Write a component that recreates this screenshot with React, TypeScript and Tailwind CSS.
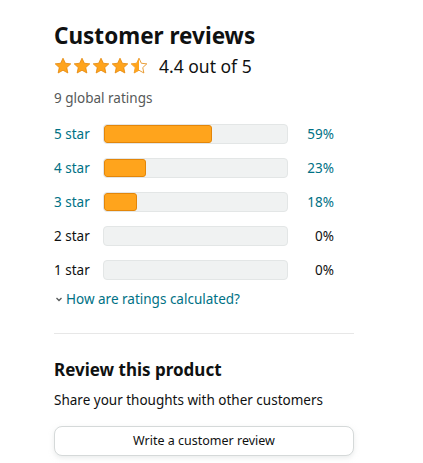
const rows = [
  { label: '5 star', pct: 59 },
  { label: '4 star', pct: 23 },
  { label: '3 star', pct: 18 },
  { label: '2 star', pct: 0 },
  { label: '1 star', pct: 0 },
];

function Star({ fill }: { fill: 'full' | 'half' }) {
  const d =
    'M9 1.2l2.35 5.05 5.45.62-4.05 3.72 1.1 5.38L9 13.25 4.15 15.97l1.1-5.38L1.2 6.87l5.45-.62z';
  return (
    <svg width="18" height="18" viewBox="0 0 18 18">
      <defs>
        <clipPath id="halfclip">
          <rect x="0" y="0" width="9" height="18" />
        </clipPath>
      </defs>
      {fill === 'full' ? (
        <path d={d} fill="#FFA41C" stroke="#E3860A" strokeWidth="0.8" strokeLinejoin="round" />
      ) : (
        <>
          <path d={d} fill="#fff" stroke="#E3860A" strokeWidth="0.8" strokeLinejoin="round" />
          <path d={d} fill="#FFA41C" clipPath="url(#halfclip)" />
        </>
      )}
    </svg>
  );
}

export default function App() {
  return (
    <div className="min-h-screen bg-white pl-[54px] pt-[20px] text-[#0F1111]" style={{ fontFamily: '"Noto Sans", Arial, sans-serif' }}>
      <div className="w-[300px]">
        <h2 className="text-[22.5px] font-bold leading-[32px]">Customer reviews</h2>
        <div className="mt-[2px] flex items-center">
          <div className="flex gap-[1px]">
            <Star fill="full" />
            <Star fill="full" />
            <Star fill="full" />
            <Star fill="full" />
            <Star fill="half" />
          </div>
          <span className="ml-[11px] text-[17.5px] leading-[24px]">4.4 out of 5</span>
        </div>
        <p className="mt-[10px] text-[13.5px] leading-[20px] text-[#565959]">9 global ratings</p>

        <div className="mt-[16px] flex w-[280px] flex-col gap-[14px]">
          {rows.map((r) => {
            const link = r.pct > 0;
            return (
              <div key={r.label} className="flex h-[20px] items-center text-[13.5px]">
                <span className={`w-[49px] ${link ? 'text-[#007185]' : 'text-[#0F1111]'}`}>{r.label}</span>
                <div className="h-[20px] w-[185px] overflow-hidden rounded-[4px] border border-[#E3E6E6] bg-[#F0F2F2]">
                  {r.pct > 0 && (
                    <div
                      className="h-full rounded-[3px] border border-[#E3860A] bg-[#FFA41C]"
                      style={{ width: `${r.pct}%` }}
                    />
                  )}
                </div>
                <span className={`ml-auto text-right ${link ? 'text-[#007185]' : 'text-[#0F1111]'}`}>{r.pct}%</span>
              </div>
            );
          })}
        </div>

        <div className="mt-[9px] flex items-center text-[13.5px] leading-[20px] text-[#007185]">
          <svg width="10" height="10" viewBox="0 0 10 10" className="mr-[2px]">
            <path d="M2.5 4l2.5 2.5L7.5 4" fill="none" stroke="#565959" strokeWidth="1.3" />
          </svg>
          <span>How are ratings calculated?</span>
        </div>

        <div className="mt-[24px] h-px bg-[#E7E7E7]" />

        <h3 className="mt-[24px] text-[17px] font-bold leading-[24px]">Review this product</h3>
        <p className="mt-[8px] text-[13.5px] leading-[20px]">Share your thoughts with other customers</p>
        <button className="mt-[16px] h-[30px] w-full rounded-[8px] border border-[#D5D9D9] bg-white text-[12.5px] shadow-[0_2px_5px_rgba(213,217,217,0.5)]">
          Write a customer review
        </button>
      </div>
    </div>
  );
}
